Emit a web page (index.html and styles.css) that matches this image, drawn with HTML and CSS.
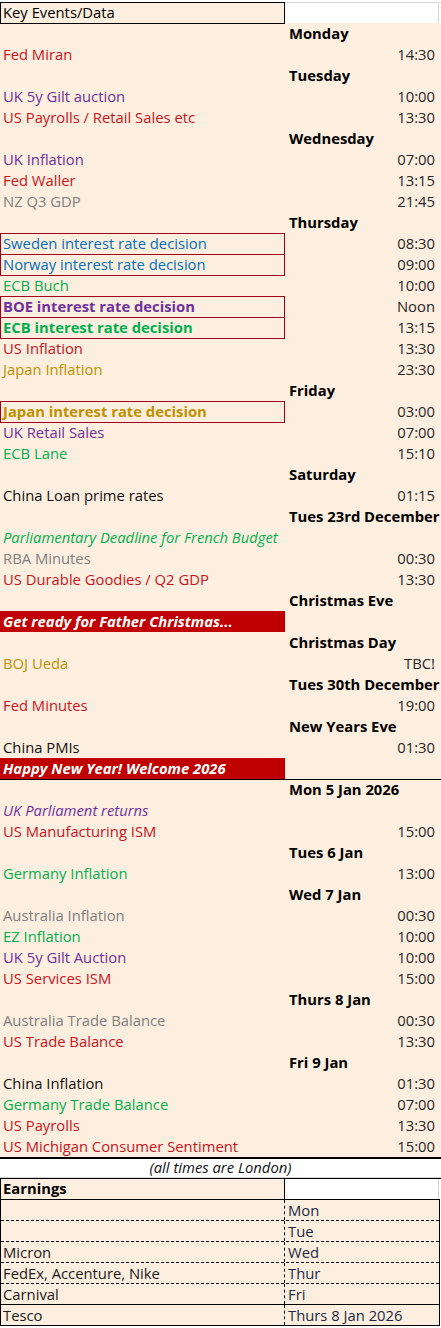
FILE: index.html
```html
<!DOCTYPE html>
<html>
<head>
<meta charset="utf-8">
<link rel="stylesheet" href="styles.css">
</head>
<body>
<div class="sheet">
  <div class="row first"><div class="a keybox">Key Events/Data</div><div class="b blank"></div></div>
  <div class="row"><div class="a keyclose"></div><div class="b day">Monday</div></div>
  <div class="row"><div class="a red">Fed Miran</div><div class="b t">14:30</div></div>
  <div class="row"><div class="a"></div><div class="b day">Tuesday</div></div>
  <div class="row"><div class="a purple">UK 5y Gilt auction</div><div class="b t">10:00</div></div>
  <div class="row"><div class="a red">US Payrolls / Retail Sales etc</div><div class="b t">13:30</div></div>
  <div class="row"><div class="a"></div><div class="b day">Wednesday</div></div>
  <div class="row"><div class="a purple">UK Inflation</div><div class="b t">07:00</div></div>
  <div class="row"><div class="a red">Fed Waller</div><div class="b t">13:15</div></div>
  <div class="row"><div class="a gray">NZ Q3 GDP</div><div class="b t">21:45</div></div>
  <div class="row"><div class="a"></div><div class="b day">Thursday</div></div>
  <div class="row"><div class="a blue box">Sweden interest rate decision</div><div class="b t">08:30</div></div>
  <div class="row"><div class="a blue box">Norway interest rate decision</div><div class="b t">09:00</div></div>
  <div class="row"><div class="a green boxclose">ECB Buch</div><div class="b t">10:00</div></div>
  <div class="row"><div class="a purple bold box">BOE interest rate decision</div><div class="b t">Noon</div></div>
  <div class="row"><div class="a green bold box">ECB interest rate decision</div><div class="b t">13:15</div></div>
  <div class="row"><div class="a red boxclose">US Inflation</div><div class="b t">13:30</div></div>
  <div class="row"><div class="a gold">Japan Inflation</div><div class="b t">23:30</div></div>
  <div class="row"><div class="a"></div><div class="b day">Friday</div></div>
  <div class="row"><div class="a gold bold box">Japan interest rate decision</div><div class="b t">03:00</div></div>
  <div class="row"><div class="a purple boxclose">UK Retail Sales</div><div class="b t">07:00</div></div>
  <div class="row"><div class="a green">ECB Lane</div><div class="b t">15:10</div></div>
  <div class="row"><div class="a"></div><div class="b day">Saturday</div></div>
  <div class="row"><div class="a black">China Loan prime rates</div><div class="b t">01:15</div></div>
  <div class="row"><div class="a"></div><div class="b day">Tues 23rd December</div></div>
  <div class="row"><div class="a green italic wide">Parliamentary Deadline for French Budget</div><div class="b t"></div></div>
  <div class="row"><div class="a gray">RBA Minutes</div><div class="b t">00:30</div></div>
  <div class="row"><div class="a red">US Durable Goodies / Q2 GDP</div><div class="b t">13:30</div></div>
  <div class="row"><div class="a"></div><div class="b day">Christmas Eve</div></div>
  <div class="row"><div class="a banner">Get ready for Father Christmas...</div><div class="b"></div></div>
  <div class="row"><div class="a"></div><div class="b day">Christmas Day</div></div>
  <div class="row"><div class="a gold">BOJ Ueda</div><div class="b t">TBC!</div></div>
  <div class="row"><div class="a"></div><div class="b day">Tues 30th December</div></div>
  <div class="row"><div class="a red">Fed Minutes</div><div class="b t">19:00</div></div>
  <div class="row"><div class="a"></div><div class="b day">New Years Eve</div></div>
  <div class="row"><div class="a black">China PMIs</div><div class="b t">01:30</div></div>
  <div class="row"><div class="a banner">Happy New Year! Welcome 2026</div><div class="b"></div></div>
  <div class="row rule"><div class="a"></div><div class="b day">Mon 5 Jan 2026</div></div>
  <div class="row"><div class="a purple italic">UK Parliament returns</div><div class="b t"></div></div>
  <div class="row"><div class="a red">US Manufacturing ISM</div><div class="b t">15:00</div></div>
  <div class="row"><div class="a"></div><div class="b day">Tues 6 Jan</div></div>
  <div class="row"><div class="a green">Germany Inflation</div><div class="b t">13:00</div></div>
  <div class="row"><div class="a"></div><div class="b day">Wed 7 Jan</div></div>
  <div class="row"><div class="a gray">Australia Inflation</div><div class="b t">00:30</div></div>
  <div class="row"><div class="a green">EZ Inflation</div><div class="b t">10:00</div></div>
  <div class="row"><div class="a purple">UK 5y Gilt Auction</div><div class="b t">10:00</div></div>
  <div class="row"><div class="a red">US Services ISM</div><div class="b t">15:00</div></div>
  <div class="row"><div class="a"></div><div class="b day">Thurs 8 Jan</div></div>
  <div class="row"><div class="a gray">Australia Trade Balance</div><div class="b t">00:30</div></div>
  <div class="row"><div class="a red">US Trade Balance</div><div class="b t">13:30</div></div>
  <div class="row"><div class="a"></div><div class="b day">Fri 9 Jan</div></div>
  <div class="row"><div class="a black">China Inflation</div><div class="b t">01:30</div></div>
  <div class="row"><div class="a green">Germany Trade Balance</div><div class="b t">07:00</div></div>
  <div class="row"><div class="a red">US Payrolls</div><div class="b t">13:30</div></div>
  <div class="row"><div class="a red">US Michigan Consumer Sentiment</div><div class="b t">15:00</div></div>
  <div class="note">(all times are London)</div>
  <div class="row earn-head"><div class="a ehead">Earnings</div><div class="b eblank"></div></div>
  <div class="earnings">
    <div class="erow first-e"><div class="ea"></div><div class="eb">Mon</div></div>
    <div class="erow dash"><div class="ea"></div><div class="eb">Tue</div></div>
    <div class="erow dash"><div class="ea">Micron</div><div class="eb">Wed</div></div>
    <div class="erow dash"><div class="ea">FedEx, Accenture, Nike</div><div class="eb">Thur</div></div>
    <div class="erow dash"><div class="ea">Carnival</div><div class="eb">Fri</div></div>
    <div class="erow solid"><div class="ea">Tesco</div><div class="eb">Thurs 8 Jan 2026</div></div>
  </div>
</div>
</body>
</html>
```

FILE: styles.css
```css
html, body {
  margin: 0;
  padding: 0;
  background: #ffffff;
}

.sheet {
  width: 441px;
  padding-top: 2px;
  font-family: "Open Sans", "Noto Sans", sans-serif;
  font-size: 14.8px;
  color: #262626;
  overflow: hidden;
}

.row {
  display: grid;
  grid-template-columns: 285px 156px;
  height: 21px;
  line-height: 21px;
  background: #fdefdf;
}

.row.first {
  background: transparent;
}

.a {
  padding-left: 3px;
  white-space: nowrap;
  overflow: hidden;
}

.a.wide {
  overflow: visible;
}

.b {
  white-space: nowrap;
  overflow: visible;
}

.b.t {
  text-align: right;
  padding-right: 6px;
}

.b.day {
  padding-left: 4px;
  font-weight: 700;
  color: #000;
}

.b.blank {
  background: #ffffff;
  box-shadow: inset 0 1px 0 #d4d4d4, inset -2px 0 0 #fff, inset -3px 0 0 #d4d4d4;
}

.keybox {
  background: #fdefdf;
  color: #000;
  box-shadow: inset 1px 1px 0 #000, inset -1px 0 0 #000;
}

.keyclose {
  box-shadow: inset 0 1px 0 #000;
}

.box {
  box-shadow: inset 1px 1px 0 #a0001c, inset -1px 0 0 #a0001c;
}

.boxclose {
  box-shadow: inset 0 1px 0 #a0001c;
}

.red { color: #c8141e; }
.purple { color: #7030a0; }
.gray { color: #808080; }
.blue { color: #0070c0; }
.green { color: #00b050; }
.gold { color: #bf9000; }
.black { color: #111; }
.bold { font-weight: 700; }
.italic { font-style: italic; }

.banner {
  background: #c00000;
  color: #ffffff;
  font-weight: 700;
  font-style: italic;
}

.row.rule {
  box-shadow: inset 0 1px 0 #000;
}

.note {
  height: 21px;
  line-height: 21px;
  background: #ffffff;
  text-align: center;
  font-style: italic;
  color: #111;
  box-shadow: inset 0 2px 0 #000, inset 0 -1px 0 #d4d4d4;
}

.row.earn-head {
  background: transparent;
}

.ehead {
  background: #fdefdf;
  font-weight: 700;
  color: #000;
  box-shadow: inset 1px 1px 0 #000, inset -1px 0 0 #000;
}

.eblank {
  background: #ffffff;
  box-shadow: inset 0 1px 0 #000, inset -2px 0 0 #fff, inset -3px 0 0 #d4d4d4;
}

.earnings {
  width: 440px;
  box-sizing: border-box;
  border: 1px solid #000;
  background: #fdefdf;
}

.erow {
  display: grid;
  grid-template-columns: 284px 1fr;
  height: 21px;
  line-height: 20px;
  box-sizing: border-box;
  color: #1a1a1a;
}

.erow.first-e {
  height: 20px;
}

.erow.dash {
  border-top: 1px dashed #000;
}

.erow.solid {
  border-top: 1px solid #000;
}

.ea {
  padding-left: 2px;
  border-right: 1px dashed #000;
  white-space: nowrap;
}

.eb {
  padding-left: 3px;
  white-space: nowrap;
  color: #1b2a44;
}
```
